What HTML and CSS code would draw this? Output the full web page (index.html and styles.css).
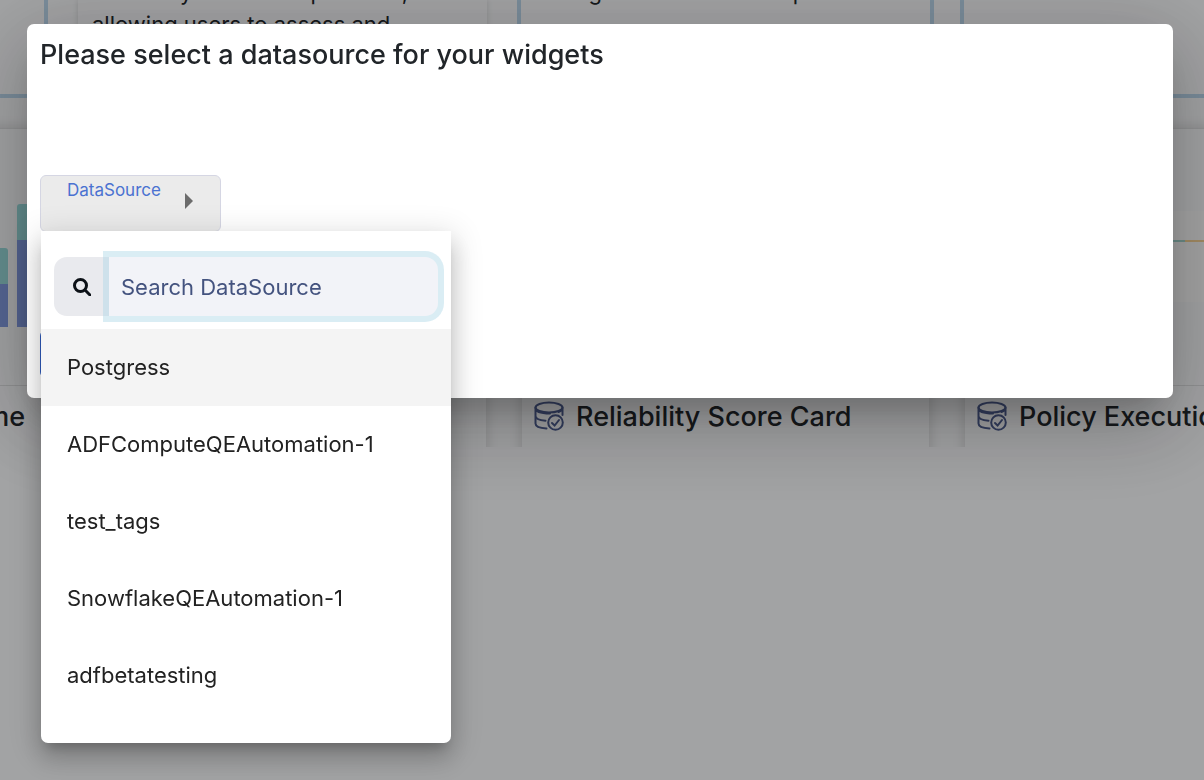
FILE: index.html
```
<!DOCTYPE html>
<html lang="en">
<head>
  <meta charset="UTF-8" />
  <meta name="viewport" content="width=device-width, initial-scale=1.0"/>
  <title>Select a datasource</title>

  <link rel="stylesheet" href="styles.css">
</head>
<body>

  <svg class="sprite" aria-hidden="true">
    <symbol id="db-check" viewBox="0 0 30 30">
      <ellipse cx="15" cy="6.5" rx="13.5" ry="5" />
      <path d="M1.5 6.5v16c0 2.800 4.500 4.600 11 5M28.500 6.500v7.500M1.500 7c0 3.500 6 5.500 14.500 5.500M24.500 11c2.500-1 4-2.500 4-4.500M1.500 15c0 2.500 4 4.200 10 4.700" />
      <circle cx="21.500" cy="21.500" r="7.300" />
      <path d="M18 22l2.600 2.500 4.400-5.500" />
    </symbol>
  </svg>

  <main class="dashboard">
    <div class="row info-row">
      <section class="info-card selected"></section>
      <section class="info-card plain">
        <p>variability of the one purcaset, allowing users to assess and</p>
      </section>
      <section class="info-card selected">
        <p>during the selected time period</p>
      </section>
      <section class="info-card selected"></section>
    </div>

    <div class="row widget-row">
      <section class="widget">
        <div class="chart bars">
          <div class="bar small"></div>
          <div class="bar"></div>
        </div>
        <h2 class="widget-title end">Time</h2>
      </section>
      <section class="widget">
        <div class="chart"></div>
        <h2 class="widget-title"></h2>
      </section>
      <section class="widget">
        <div class="chart"></div>
        <h2 class="widget-title"><svg class="db-icon"><use href="#db-check" /></svg>Reliability Score Card</h2>
      </section>
      <section class="widget">
        <div class="chart lines"><div class="plot"></div></div>
        <h2 class="widget-title"><svg class="db-icon"><use href="#db-check" /></svg>Policy Execution</h2>
      </section>
    </div>
  </main>

  <div class="backdrop">
    <div class="dialog" role="dialog" aria-labelledby="dialog-title">
      <h1 id="dialog-title">Please select a datasource for your widgets</h1>
      <div class="picker">
        <button class="picker-btn" type="button" aria-expanded="true">
          <span>DataSource</span>
          <svg class="arrow" viewBox="0 0 8 16"><path d="M0 0l8 8-8 8z" /></svg>
        </button>
        <div class="menu">
          <div class="search">
            <label class="search-icon" for="search" aria-label="Search DataSource">
              <svg viewBox="0 0 18 18"><circle cx="7.500" cy="7.500" r="6" /><path d="M12 12l5 5" /></svg>
            </label>
            <input id="search" type="text" placeholder="Search DataSource" />
          </div>
          <button class="option active" type="button">Postgress</button>
          <button class="option" type="button">ADFComputeQEAutomation-1</button>
          <button class="option" type="button">test_tags</button>
          <button class="option" type="button">SnowflakeQEAutomation-1</button>
          <button class="option" type="button">adfbetatesting</button>
        </div>
      </div>
      <button class="save-btn" type="button" aria-label="Save"></button>
    </div>
  </div>

</body>
</html>
```

FILE: styles.css
```
:root {
  --page-bg: #eff0f2;
  --text-color: #212529;
  --border-blue: #b4cfe4;
  --navy: #44537f;
}

* {
  box-sizing: border-box;
}

body {
  margin: 0;
  height: 100vh;
  overflow: hidden;
  font-family: Inter, sans-serif;
  background: var(--page-bg);
  color: var(--text-color);
}

button,
input {
  font-family: inherit;
}

.sprite {
  position: absolute;
  width: 0;
  height: 0;
}

/* dashboard behind the dialog, scrolled sideways */
.dashboard {
  overflow: hidden;
}

.row {
  display: flex;
  gap: 26px;
  width: max-content;
  margin-left: -369px;
}

.info-card {
  width: 417px;
  height: 98px;
  border: 4px solid transparent;
  border-top: none;
}

.info-card.selected {
  border-color: var(--border-blue);
}

.info-card.plain {
  width: 409px;
  margin: 0 4px;
  border: none;
  box-shadow: 0 0 6px rgba(0, 0, 0, 0.14);
}

.info-card p {
  margin: -24px 0 0;
  padding: 0 14px;
  width: 370px;
  font-size: 22px;
  line-height: 32px;
}

.widget-row {
  padding-top: 30px;
  height: 349px;
  overflow: hidden;
}

.widget {
  width: 407px;
  margin: 0 5px;
  height: 340px;
  border-top: 1px solid #d6d7d9;
  box-shadow: 0 0 12px rgba(0, 0, 0, 0.16);
}

.chart {
  height: 257px;
  border-bottom: 1px solid #d6d7d9;
}

.chart.bars {
  display: flex;
  align-items: flex-end;
  justify-content: flex-end;
  gap: 9px;
  padding-bottom: 58px;
}

.bar {
  width: 26px;
  height: 123px;
  border-radius: 3px 3px 0 0;
  background: linear-gradient(#94d3d4 36px, #7f97db 36px);
}

.bar.small {
  height: 79px;
}

.chart.lines {
  padding-top: 82px;
}

.plot {
  height: 91px;
  background: linear-gradient(90deg, #9fcfc8 220px, #f0cd92 220px) 0 29px / 100% 2px no-repeat #f3f3f3;
}

.widget-title {
  display: flex;
  align-items: center;
  gap: 12px;
  margin: 0;
  padding: 0 12px;
  height: 60px;
  font-size: 27px;
  font-weight: 500;
  white-space: nowrap;
}

.widget-title.end {
  justify-content: flex-end;
  padding-right: 18px;
}

.db-icon {
  width: 30px;
  height: 30px;
  fill: none;
  stroke: #4b5a8b;
  stroke-width: 2;
  stroke-linecap: round;
}

/* dialog */
.backdrop {
  position: fixed;
  inset: 0;
  padding: 24px 31px 0 27px;
  background: rgba(0, 0, 0, 0.32);
}

.dialog {
  padding: 13px 13px 20px;
  border-radius: 7px;
  background: #fff;
  box-shadow: 0 22px 30px -14px rgba(0, 0, 0, 0.2), 0 24px 76px 6px rgba(0, 0, 0, 0.14), 0 18px 92px 16px rgba(0, 0, 0, 0.12);
}

.dialog h1 {
  margin: 0 0 102px;
  font-size: 27px;
  font-weight: 500;
  line-height: 36px;
}

.picker {
  position: relative;
  height: 56px;
}

.picker-btn {
  display: flex;
  align-items: flex-start;
  gap: 24px;
  width: 181px;
  height: 57px;
  padding: 4px 26px;
  border: 1px solid #d5d6e3;
  border-radius: 6px;
  background: #ebebeb;
  color: #4a72d1;
  font-size: 17px;
  line-height: 20px;
}

.arrow {
  width: 8px;
  height: 16px;
  margin-top: 13px;
  fill: #6c6c6c;
}

.menu {
  position: absolute;
  top: 56px;
  left: 1px;
  width: 410px;
  padding: 26px 0 29px;
  border-radius: 0 0 7px 7px;
  background: #fff;
  box-shadow: 0 10px 12px -6px rgba(0, 0, 0, 0.2), 0 16px 24px 2px rgba(0, 0, 0, 0.14), 0 6px 30px 5px rgba(0, 0, 0, 0.12);
}

.search {
  display: flex;
  height: 59px;
  margin: 0 13px 13px;
}

.search-icon {
  display: flex;
  align-items: center;
  width: 55px;
  padding-left: 19px;
  border-radius: 13px 0 0 13px;
  background: #e9eaee;
}

.search-icon svg {
  width: 18px;
  height: 18px;
  fill: none;
  stroke: #0c1117;
  stroke-width: 3;
  stroke-linecap: round;
}

.search input {
  flex: 1;
  min-width: 0;
  padding: 0 12px;
  border: none;
  border-radius: 0 13px 13px 0;
  outline: none;
  background: #f2f3f8;
  color: var(--navy);
  font-size: 22px;
  box-shadow: 0 0 0 6px rgba(173, 216, 230, 0.45);
}

.search input::placeholder {
  color: var(--navy);
}

.option {
  display: block;
  width: 100%;
  height: 77px;
  padding: 0 26px 2px;
  border: none;
  background: none;
  color: #222;
  font-size: 22px;
  text-align: left;
}

.option.active {
  background: #f4f4f4;
}

.save-btn {
  display: block;
  width: 120px;
  height: 48px;
  margin-top: 99px;
  border: none;
  border-radius: 6px;
  background: #2f5cc0;
}
```
